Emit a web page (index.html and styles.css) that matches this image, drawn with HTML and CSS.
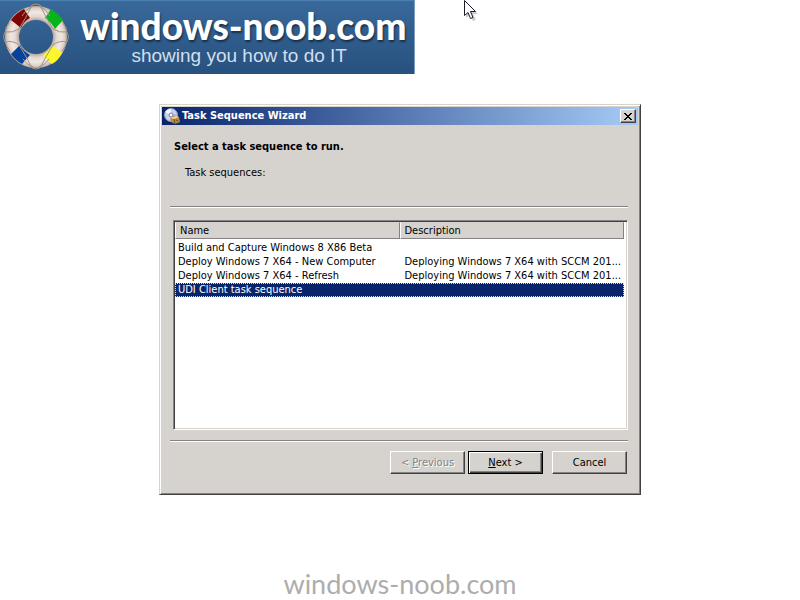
FILE: index.html
```html
<!DOCTYPE html>
<html lang="en">
<head>
    <meta charset="UTF-8">
    <meta name="viewport" content="width=device-width, initial-scale=1.0">
    <title>Task Sequence Wizard</title>
    <link rel="stylesheet" href="styles.css">
</head>
<body>
    <header class="banner">
        <svg class="banner-logo" width="66" height="66" viewBox="0 0 66 66" aria-hidden="true">
            <defs>
                <radialGradient id="ring" cx="33" cy="33" r="32" gradientUnits="userSpaceOnUse">
                    <stop offset="0.54" stop-color="#b9aaa2"/>
                    <stop offset="0.64" stop-color="#e2d6d0"/>
                    <stop offset="0.78" stop-color="#f1e8e4"/>
                    <stop offset="0.9" stop-color="#dccfc8"/>
                    <stop offset="1" stop-color="#a3948a"/>
                </radialGradient>
            </defs>
            <circle cx="33" cy="33" r="24" fill="none" stroke="url(#ring)" stroke-width="14"/>
            <path d="M8 16 Q13 9 21 5 L27 14 Q21 17 18 24 Z" fill="#7d0505"/>
            <path d="M42 14 L48 5 Q55 9 60 16 L52 25 Q48 18 42 14 Z" fill="#06b31b"/>
            <path d="M8 50 L17 41 Q20 47 27 51 L19 60 Q12 56 8 50 Z" fill="#07429a"/>
            <path d="M40 51 Q46 47 49 41 L59 49 Q55 57 49 60 Z" fill="#fbf728"/>
            <g fill="none" stroke="#a3957f" stroke-width="1">
                <path d="M29 1 Q23 14 16 25 Q10 29 2 28 Q-1 33 2 38 Q10 36 16 41 Q23 52 29 64 Q33 66 37 64 Q43 52 50 41 Q56 36 64 38 Q67 33 64 28 Q56 29 50 25 Q43 14 37 1 Q33 -1 29 1 Z"/>
                <path d="M19 12 Q23 5 30 2 M36 2 Q43 5 47 12 M2 30 Q2 23 6 19 M64 30 Q64 23 60 19 M2 36 Q3 43 7 47 M64 36 Q63 43 59 47 M20 55 Q24 61 30 63 M46 55 Q42 61 36 63"/>
            </g>
        </svg>
        <div class="banner-text">
            <p class="banner-title">windows-noob.com</p>
            <p class="banner-tagline">showing you how to do IT</p>
        </div>
    </header>

    <main class="desktop">
        <section class="dialog" role="dialog" aria-labelledby="dialog-title">
            <div class="title-bar">
                <svg class="title-icon" width="16" height="16" viewBox="0 0 16 16" aria-hidden="true">
                    <circle cx="7" cy="7" r="6.5" fill="#c9d2ec" stroke="#8e99bd"/>
                    <path d="M7 7 L1 4 Q3 1 7 1 Z" fill="#f5f7ff"/>
                    <path d="M7 7 L13 6 Q13 9 11 11 Z" fill="#a9b3dc"/>
                    <circle cx="7" cy="7" r="2" fill="#fff" stroke="#6c78a6"/>
                    <path d="M6 10 L10 8 L15 9 L16 14 L11 16 L7 14 Z" fill="#b98a45"/>
                    <path d="M6 10 L10 11 L15 9 L12 8 Z" fill="#f0d49b"/>
                    <path d="M10 11 L11 16 M12 12 L14 13" stroke="#6e4818" fill="none"/>
                </svg>
                <h1 class="title-text" id="dialog-title">Task Sequence Wizard</h1>
                <button type="button" class="close-btn" aria-label="Close">
                    <svg width="8" height="7" viewBox="0 0 8 7" shape-rendering="crispEdges" aria-hidden="true">
                        <path d="M0 0h2v1h1v1h2v-1h1v-1h2v1h-1v1h-1v1h-1v1h1v1h1v1h1v1h-2v-1h-1v-1h-2v1h-1v1h-2v-1h1v-1h1v-1h1v-1h-1v-1h-1v-1h-1z" fill="#000"/>
                    </svg>
                </button>
            </div>

            <div class="dialog-body">
                <h2 class="heading">Select a task sequence to run.</h2>
                <p class="list-label" id="list-label">Task sequences:</p>
                <hr class="divider">
                <div class="list-box">
                    <table class="task-list" aria-labelledby="list-label">
                        <thead>
                            <tr>
                                <th class="col-name" scope="col">Name</th>
                                <th scope="col">Description</th>
                            </tr>
                        </thead>
                        <tbody>
                            <tr>
                                <td>Build and Capture Windows 8 X86 Beta</td>
                                <td></td>
                            </tr>
                            <tr>
                                <td>Deploy Windows 7 X64 - New Computer</td>
                                <td>Deploying Windows 7 X64 with SCCM 201...</td>
                            </tr>
                            <tr>
                                <td>Deploy Windows 7 X64 - Refresh</td>
                                <td>Deploying Windows 7 X64 with SCCM 201...</td>
                            </tr>
                            <tr class="selected" aria-selected="true">
                                <td>UDI Client task sequence</td>
                                <td></td>
                            </tr>
                        </tbody>
                    </table>
                </div>
                <hr class="divider">
                <div class="actions">
                    <button type="button" class="btn" disabled>&lt; <u>P</u>revious</button>
                    <button type="button" class="btn btn-default"><u>N</u>ext &gt;</button>
                    <button type="button" class="btn btn-cancel">Cancel</button>
                </div>
            </div>
        </section>
    </main>

    <footer class="watermark">windows-noob.com</footer>

    <svg class="cursor" width="16" height="22" viewBox="0 0 16 22" aria-hidden="true">
        <path d="M2 3 L2 18 L6 15 L9 21 L12 20 L9 14 L14 14 Z" fill="#000" opacity="0.2"/>
        <path d="M0.5 0.5 V15.5 L4 12.5 L6.5 18.5 L9 17.5 L6.5 11.5 H11.5 Z" fill="#fff" stroke="#1b1b2b"/>
    </svg>
</body>
</html>
```
FILE: styles.css
```css
* {
    margin: 0;
    padding: 0;
    box-sizing: border-box;
}

body {
    display: flex;
    flex-direction: column;
    min-height: 100vh;
    background: #fff;
    color: #000;
    font-family: Tahoma, 'DejaVu Sans Condensed', sans-serif;
    font-size: 11px;
    line-height: 14px;
}

/* site banner */
.banner {
    display: flex;
    align-items: center;
    align-self: flex-start;
    gap: 11px;
    padding: 3px 8px 4px 3px;
    background: linear-gradient(#39689a, #27517f);
    border-top: 1px solid #4a7fb0;
    border-right: 1px solid #7f9dbd;
    color: #fff;
}

.banner-logo {
    display: block;
    overflow: visible;
}

.banner-text {
    text-align: center;
}

.banner-title {
    font-family: Lato, sans-serif;
    font-size: 37px;
    font-weight: 900;
    line-height: 38px;
    text-shadow: 1px 2px 2px rgba(0, 0, 0, 0.5);
}

.banner-tagline {
    padding-right: 8px;
    font-family: 'Liberation Sans', sans-serif;
    font-size: 19px;
    line-height: 22px;
    color: #d3dfec;
}

/* dialog window */
.desktop {
    flex: 1;
    padding: 30px 16px;
}

.dialog {
    max-width: 482px;
    margin: 0 auto;
    padding: 1px;
    background: #d6d3ce;
    border: 1px solid;
    border-color: #d6d3ce #424142 #424142 #d6d3ce;
    box-shadow: inset 1px 1px #fff, inset -1px -1px #848284;
}

.title-bar {
    display: flex;
    align-items: center;
    gap: 2px;
    height: 18px;
    margin: 1px;
    padding: 0 2px;
    background: linear-gradient(to right, #08246b, #a5cbf7);
    color: #fff;
}

.title-text {
    flex: 1;
    font-size: 11px;
    font-weight: bold;
}

.close-btn {
    display: flex;
    align-items: center;
    justify-content: center;
    width: 16px;
    height: 14px;
    background: #d6d3ce;
    border: 1px solid;
    border-color: #fff #424142 #424142 #fff;
    box-shadow: inset -1px -1px #848284;
}

.dialog-body {
    padding: 14px 11px 19px 9px;
}

.heading {
    padding-left: 4px;
    font-size: 11px;
    font-weight: bold;
}

.list-label {
    margin: 12px 0 26px;
    padding-left: 15px;
}

.divider {
    height: 2px;
    border: 0;
    border-top: 1px solid #848284;
    border-bottom: 1px solid #fff;
}

.list-box {
    height: 210px;
    margin: 12px 0 10px 3px;
    background: #fff;
    border: 1px solid;
    border-color: #848284 #fff #fff #848284;
    box-shadow: inset 1px 1px #424142, inset -1px -1px #d6d3ce;
    padding: 1px;
}

.task-list {
    width: calc(100% - 2px);
    table-layout: fixed;
    border-collapse: separate;
    border-spacing: 0;
}

.task-list th {
    height: 17px;
    padding-left: 4px;
    background: #d6d3ce;
    border: 1px solid;
    border-color: #d6d3ce #848284 #848284 #fff;
    font-weight: normal;
    text-align: left;
}

.task-list .col-name {
    width: 50%;
}

.task-list tbody::before {
    content: "";
    display: block;
    height: 2px;
}

.task-list td {
    height: 14px;
    padding-left: 3px;
    overflow: hidden;
    white-space: nowrap;
    text-overflow: ellipsis;
}

.task-list td + td {
    padding-left: 5px;
}

.selected {
    background: #08246b;
    color: #fff;
    outline: 1px dotted #f7db94;
    outline-offset: -1px;
}

.actions {
    display: flex;
    justify-content: flex-end;
    gap: 3px;
    margin-top: 9px;
    padding-right: 1px;
}

.btn {
    width: 75px;
    height: 23px;
    background: #d6d3ce;
    border: 1px solid;
    border-color: #fff #424142 #424142 #fff;
    box-shadow: inset -1px -1px #848284;
    color: #000;
    font: inherit;
}

.btn:disabled {
    color: #848284;
    text-shadow: 1px 1px #fff;
}

.btn-default {
    border-color: #000;
    box-shadow: inset 1px 1px #fff, inset -1px -1px #424142, inset -2px -2px #848284;
}

.btn-cancel {
    margin-left: 6px;
}

.watermark {
    color: #adadad;
    font-family: Lato, sans-serif;
    font-size: 27px;
    line-height: 33px;
    text-align: center;
}

.cursor {
    position: absolute;
    top: 0;
    left: 58%;
}
```
